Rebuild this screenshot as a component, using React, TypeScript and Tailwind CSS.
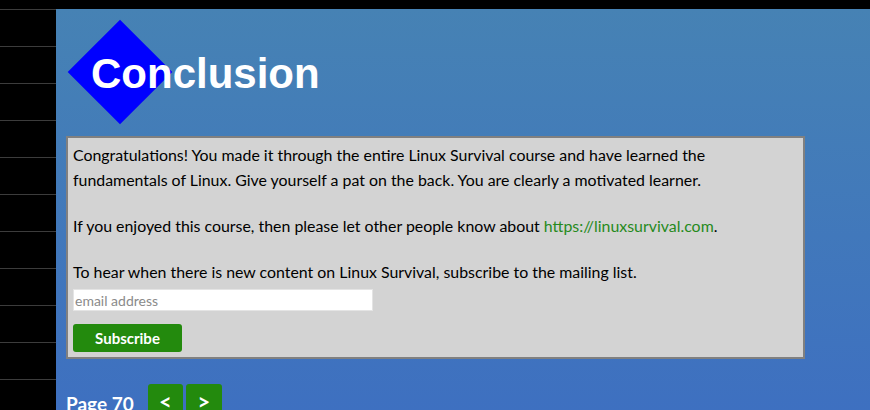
import React from 'react'

const lato = { fontFamily: 'Lato, "Open Sans", sans-serif' }

function Sidebar() {
  const rows = Array.from({ length: 11 })
  return (
    <div className="w-[56px] shrink-0 bg-black">
      {rows.map((_, i) => (
        <div key={i} className="h-[37px] border-t border-[#3c3c3c]" />
      ))}
    </div>
  )
}

export default function App() {
  return (
    <div className="w-[870px] h-[410px] overflow-hidden bg-black flex flex-col">
      <div className="h-[9px] shrink-0 bg-black" />
      <div className="flex flex-1 min-h-0">
        <Sidebar />
        <main className="flex-1 bg-linear-to-b from-[#4682b4] to-[#3b66c6] h-[600px]">
          <header className="relative h-[127px] pt-[44px]">
            <div className="absolute left-[27px] top-[26px] w-[74px] h-[74px] bg-[#0000ff] rotate-45" />
            <h1
              className="relative ml-[35px] text-[42px] leading-none font-bold text-white"
              style={{ fontFamily: '"Liberation Sans", Arial, sans-serif' }}
            >
              Conclusion
            </h1>
          </header>

          <section
            className="ml-[10px] w-[739px] border-2 border-[#808080] bg-[#d3d3d3] px-[5px] pt-[4px] pb-[5px] text-[15.9px] leading-[25px] text-black"
            style={lato}
          >
            <p>
              Congratulations! You made it through the entire Linux Survival course and have learned the
              fundamentals of Linux. Give yourself a pat on the back. You are clearly a motivated learner.
            </p>
            <p className="mt-[21px]">
              If you enjoyed this course, then please let other people know about{' '}
              <a href="#" className="text-[#268a1c]">https://linuxsurvival.com</a>.
            </p>
            <p className="mt-[21px]">
              To hear when there is new content on Linux Survival, subscribe to the mailing list.
            </p>
            <input
              type="text"
              placeholder="email address"
              className="mt-[5px] block w-[300px] h-[22px] bg-white border border-[#e4e4e4] px-[1px] text-[14px] placeholder:text-[#8a8a8a] outline-none"
              style={lato}
            />
            <button
              className="mt-[13px] block w-[109px] h-[28px] rounded-[3px] bg-[#238a0d] text-white font-bold text-[15px]"
              style={lato}
            >
              Subscribe
            </button>
          </section>

          <div className="ml-[10px] mt-[25px] flex items-start" style={lato}>
            <span className="mt-[8px] w-[82px] text-[19px] font-bold text-white leading-[24px]">Page 70</span>
            <button className="w-[35px] h-[34px] rounded-t-[3px] bg-[#238a0d] text-white font-bold text-[22px]">&lt;</button>
            <button className="ml-[3px] w-[36px] h-[34px] rounded-t-[3px] bg-[#238a0d] text-white font-bold text-[22px]">&gt;</button>
          </div>
        </main>
      </div>
    </div>
  )
}
